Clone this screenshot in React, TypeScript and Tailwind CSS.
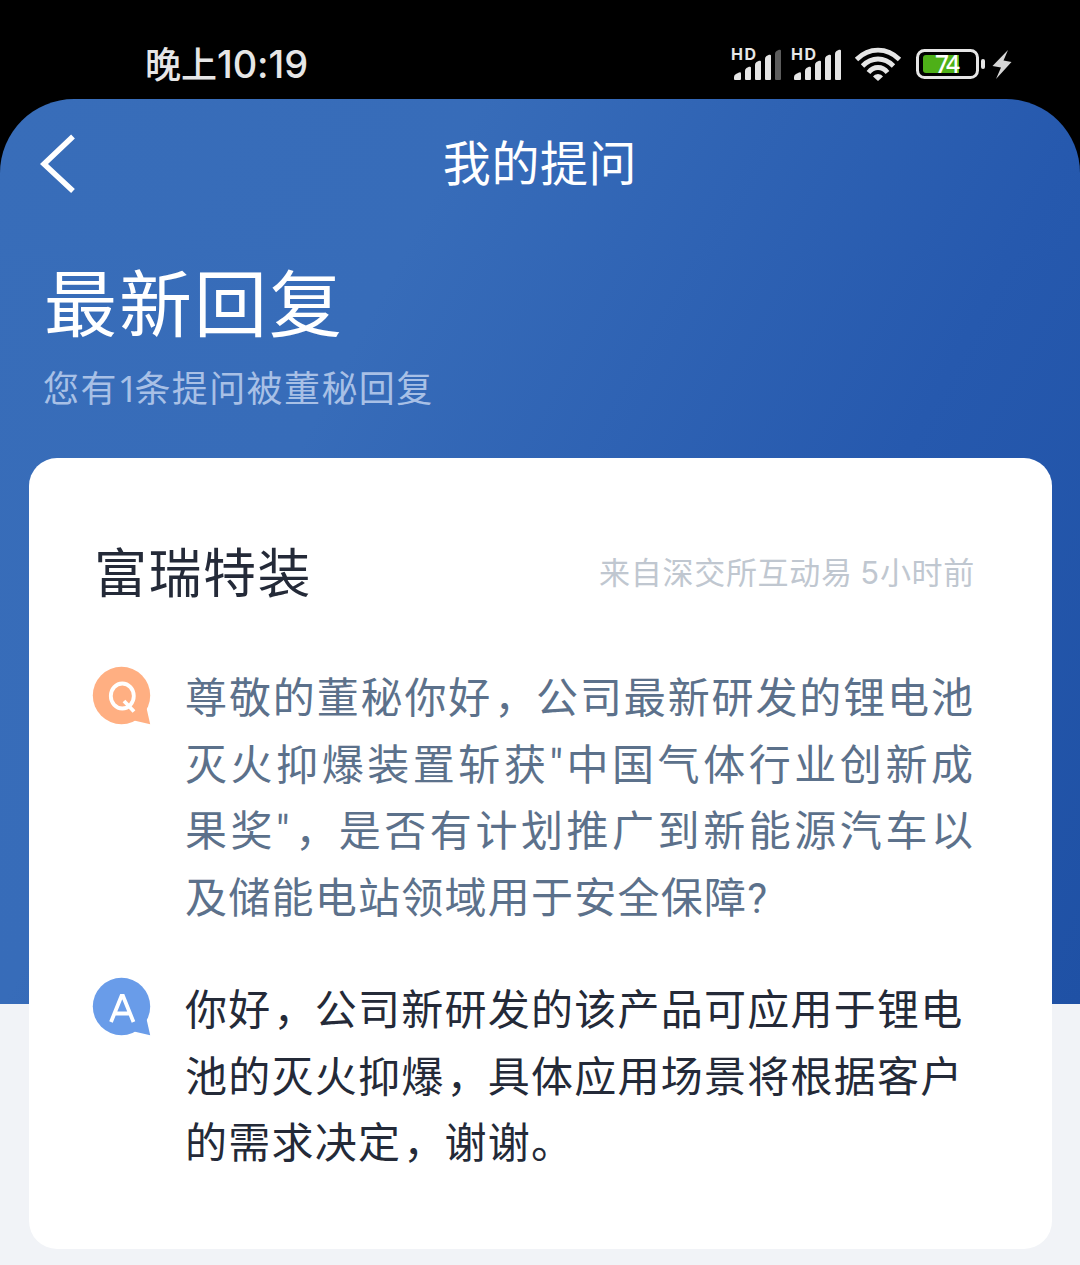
import type { ReactNode } from 'react';

const question = [
  '尊敬的董秘你好，公司最新研发的锂电池',
  '灭火抑爆装置斩获"中国气体行业创新成',
  '果奖"，是否有计划推广到新能源汽车以',
];

const answer = [
  '你好，公司新研发的该产品可应用于锂电',
  '池的灭火抑爆，具体应用场景将根据客户',
  '的需求决定，谢谢。',
];

function Signal({ weak = false }: { weak?: boolean }) {
  return (
    <svg width="52" height="36" viewBox="0 0 52 36" fill="#e6e6e6" className="overflow-visible">
      <text x="-1" y="14" fontSize="16" fontWeight="700" fontFamily="Inter, sans-serif" textLength="25">HD</text>
      <path d="M2 33v-2q0-2 2-3l3-1.500q2-.7 2 1V33q0 1-1 1H3q-1 0-1-1z" />
      <path d="M13 33V25q0-2 1.500-3l2.500-1.200q2-.6 2 1V33q0 1-1 1h-4q-1 0-1-1z" />
      <path d="M23 33V19q0-2 1.500-3l2.500-1.200q2-.6 2 1V33q0 1-1 1h-4q-1 0-1-1z" />
      <path d="M33 33V13q0-2 1.500-3l2.500-1.200q2-.6 2 1V33q0 1-1 1h-4q-1 0-1-1z" />
      <path d="M43 33V8q0-2 1.500-3l2.500-1.200q2-.6 2 1V33q0 1-1 1h-4q-1 0-1-1z" fill={weak ? '#5c5c5c' : '#e6e6e6'} />
    </svg>
  );
}

function Wifi() {
  return (
    <svg width="48" height="36" viewBox="0 0 48 36" fill="none" stroke="#e6e6e6" strokeWidth="4.800">
      <path d="M2.500 13.500Q12 4.200 24 4.200t21.500 9.300" />
      <path d="M8.500 20Q15.500 13 24 13t15.500 7" />
      <path d="M14.500 26.500Q18.500 21.500 24 21.500t9.500 5" />
      <path d="M24 35l-5-4.500q1.500-2.500 5-2.500t5 2.500z" fill="#e6e6e6" stroke="none" />
    </svg>
  );
}

function Battery() {
  return (
    <svg width="98" height="36" viewBox="0 0 98 36">
      <rect x="1.500" y="4.500" width="60" height="27" rx="7" fill="none" stroke="#e6e6e6" strokeWidth="3" />
      <path d="M10 9h33v18H10q-3 0-3-3V12q0-3 3-3z" fill="#4eb018" />
      <rect x="65" y="13" width="4" height="10" rx="2" fill="#e6e6e6" />
      <text x="19" y="27" fontSize="24.5" fontWeight="500" fontFamily="'Noto Sans', sans-serif" fill="#fff" textLength="25">74</text>
      <path d="M92 4L76.500 20l8.500 1.500L80 33l15.500-17-8-1.500z" fill="#d6d6d6" />
    </svg>
  );
}

function Bubble({ letter, className }: { letter: string; className: string }) {
  return (
    <svg width="60" height="60" viewBox="0 0 60 60" className={`shrink-0 ${className}`}>
      <circle cx="30.500" cy="30.500" r="28.700" fill="currentColor" />
      <path d="M55.500 43L59.200 59.200L43 55.500z" fill="currentColor" />
      {letter === 'Q' ? (
        <g fill="none" stroke="#fff" strokeWidth="3.800">
          <ellipse cx="31.300" cy="31" rx="11.500" ry="12.500" />
          <path d="M33 36l10 10.500" />
        </g>
      ) : (
        <path d="M20 46L30.500 20h1.500L42.500 46M23.500 37.500h15.500" fill="none" stroke="#fff" strokeWidth="3.800" />
      )}
    </svg>
  );
}

function Line({ children, justify = false }: { children: ReactNode; justify?: boolean }) {
  return (
    <p className={justify ? 'w-[788px] whitespace-nowrap [text-align-last:justify]' : 'whitespace-nowrap tracking-[1.25px]'}>
      {children}
    </p>
  );
}

// full-width commas sit slightly right of the CJK font's default position
function withCommas(text: string) {
  return text.split(/(，)/).map((part, i) =>
    part === '，' ? <span key={i} className="-mr-[2px] pl-[2px]">，</span> : part
  );
}

export default function App() {
  return (
    <div className="h-[1265px] w-[1080px] overflow-hidden bg-black font-['Noto_Sans_CJK_SC',sans-serif]">
      <div className="flex h-[99px] items-start justify-between pt-[46px] pr-[66px] pl-[145px] text-[#e6e6e6]">
        <span className="-mt-[6px] whitespace-nowrap text-[36px] leading-[44px] font-medium">
          晚上<span className="font-['Inter'] text-[38px] font-medium tracking-[-0.1px]">10:19</span>
        </span>
        <div className="flex">
          <Signal weak />
          <div className="ml-2"><Signal /></div>
          <div className="ml-[10px]"><Wifi /></div>
          <div className="ml-[14px]"><Battery /></div>
        </div>
      </div>

      <main className="h-[1166px] rounded-t-[74px] bg-[#f1f3f7] bg-[linear-gradient(118deg,#386db9_0%,#376cb9_31%,#2659ae_70%,#1f51a5_100%)] bg-[length:100%_905px] bg-no-repeat">
        <header className="grid h-[130px] grid-cols-[1fr_auto_1fr] items-center px-10 text-white">
          <svg width="36" height="60" viewBox="0 0 36 60" fill="none" stroke="currentColor" strokeWidth="5.500">
            <path d="M33 2.500L4 30L33 57" />
          </svg>
          <h1 className="pb-[8px] text-[48px] leading-[60px] tracking-[0.6px]">我的提问</h1>
        </header>

        <section className="flex h-[229px] flex-col pt-[20px] pl-[43px]">
          <h2 className="pl-px text-[73px] leading-[100px] tracking-[2px] text-white">最新回复</h2>
          <p className="mt-[13px] text-[36px] leading-[48px] tracking-[1.4px] text-[#a8c0e6]">
            您有<span className="font-['Noto_Sans'] tracking-[-4px]">1</span>条提问被董秘回复
          </p>
        </section>

        <article className="mr-7 ml-[29px] h-[791px] rounded-[28px] bg-white pt-[74px] pr-[77px] pl-[62px]">
          <div className="flex items-center justify-between pl-[3px]">
            <h3 className="text-[53px] leading-[76px] tracking-[1.5px] text-[#242a38]">富瑞特装</h3>
            <span className="pt-1 text-[31px] leading-[48px] tracking-[0.7px] whitespace-nowrap text-[#c0c7d0]">
              来自深交所互动易 <span className="font-['Inter']">5</span>小时前
            </span>
          </div>

          <div className="mt-[57px] flex gap-[34px] text-[#5c718b]">
            <Bubble letter="Q" className="text-[#ffaf82]" />
            <div className="mt-px font-['Roboto','Noto_Sans_CJK_SC',sans-serif] text-[42px] leading-[66.5px]">
              {question.map((text) => (
                <Line key={text} justify>{withCommas(text)}</Line>
              ))}
              <Line>及储能电站领域用于安全保障?</Line>
            </div>
          </div>

          <div className="mt-[44px] flex gap-[34px] text-[#242a38]">
            <Bubble letter="A" className="text-[#699ce9]" />
            <div className="-mt-[2px] text-[42px] leading-[66.5px]">
              {answer.map((text) => (
                <Line key={text}>{withCommas(text)}</Line>
              ))}
            </div>
          </div>
        </article>
      </main>
    </div>
  );
}
